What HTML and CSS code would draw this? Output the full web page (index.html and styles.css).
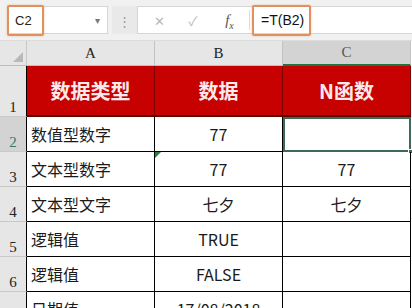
FILE: index.html
```html
<!DOCTYPE html>
<html lang="zh">
<head>
    <meta charset="utf-8">
    <title>N函数</title>
    <link rel="stylesheet" href="styles.css">
</head>
<body>
    <div class="toolbar">
        <div class="name-box">
            <span class="name-text">C2</span>
            <span class="arrow">&#9662;</span>
            <div class="mark mark-name"></div>
        </div>
        <div class="grip">&#8942;</div>
        <div class="formula-bar">
            <span class="btn cancel">&#10005;</span>
            <span class="btn enter">&#10003;</span>
            <span class="btn fx"><i>f</i><sub>x</sub></span>
            <div class="input">
                <span class="formula-text">=T(B2)</span>
                <div class="mark mark-formula"></div>
            </div>
        </div>
    </div>

    <div class="sheet">
        <div class="corner"><span class="tri"></span></div>
        <div class="col-head">A</div>
        <div class="col-head">B</div>
        <div class="col-head active">C</div>

        <div class="row-head tall">1</div>
        <div class="cell title">数据类型</div>
        <div class="cell title">数据</div>
        <div class="cell title">N函数</div>

        <div class="row-head active">2</div>
        <div class="cell left">数值型数字</div>
        <div class="cell">77</div>
        <div class="cell selected"><span class="handle"></span></div>

        <div class="row-head">3</div>
        <div class="cell left">文本型数字</div>
        <div class="cell"><span class="flag"></span>77</div>
        <div class="cell">77</div>

        <div class="row-head">4</div>
        <div class="cell left">文本型文字</div>
        <div class="cell">七夕</div>
        <div class="cell">七夕</div>

        <div class="row-head">5</div>
        <div class="cell left">逻辑值</div>
        <div class="cell">TRUE</div>
        <div class="cell"></div>

        <div class="row-head">6</div>
        <div class="cell left">逻辑值</div>
        <div class="cell">FALSE</div>
        <div class="cell"></div>

        <div class="row-head">7</div>
        <div class="cell left">日期值</div>
        <div class="cell">17/08/2018</div>
        <div class="cell"></div>
    </div>
</body>
</html>
```

FILE: styles.css
```css
* {
    margin: 0;
    padding: 0;
    box-sizing: border-box;
}

body {
    width: 412px;
    height: 308px;
    overflow: hidden;
    background-color: #ffffff;
    font-family: "Noto Sans CJK SC", "Noto Sans", sans-serif;
}

/* formula toolbar */
.toolbar {
    height: 41px;
    display: flex;
    align-items: center;
    padding-left: 8px;
    background-color: #f1f1f1;
    border-bottom: 1px solid #dcdcdc;
}

.name-box {
    position: relative;
    width: 100px;
    height: 28px;
    display: flex;
    align-items: center;
    justify-content: space-between;
    padding: 0 7px 0 6px;
    background-color: #ffffff;
    border: 1px solid #d6d6d6;
    font-family: "Liberation Sans", sans-serif;
    font-size: 13px;
    color: #222222;
}

.arrow {
    font-size: 10px;
    color: #777777;
}

.grip {
    width: 29px;
    height: 28px;
    display: flex;
    align-items: center;
    justify-content: center;
    color: #9a9a9a;
    font-size: 13px;
    background-color: #e9e9e9;
    margin: 0 0 0 4px;
    width: 25px;
}

.formula-bar {
    flex: 1;
    height: 28px;
    display: flex;
    align-items: center;
    background-color: #ffffff;
    border: 1px solid #d6d6d6;
    border-right: none;
}

.btn {
    width: 34px;
    text-align: center;
    color: #b9b9b9;
    font-size: 13px;
}

.cancel {
    margin-left: 4px;
}

.fx {
    width: 40px;
    color: #555555;
    font-family: "Liberation Serif", serif;
    font-size: 15px;
    border-right: 1px solid #dcdcdc;
    height: 20px;
    line-height: 20px;
}

.fx sub {
    font-size: 10px;
    font-style: italic;
}

.input {
    position: relative;
    flex: 1;
    height: 100%;
    display: flex;
    align-items: center;
    padding-left: 11px;
    font-family: "Liberation Sans", sans-serif;
    font-size: 14px;
    color: #111111;
}

/* orange annotation boxes */
.mark {
    position: absolute;
    border: 2px solid #e0915e;
    border-radius: 2px;
    box-shadow: 0 0 2px rgba(224, 145, 94, 0.6);
}

.mark-name {
    left: -2px;
    top: -2px;
    width: 37px;
    height: 31px;
}

.mark-formula {
    left: 2px;
    top: -2px;
    width: 59px;
    height: 31px;
}

/* worksheet grid */
.sheet {
    display: grid;
    grid-template-columns: 27px 128px 128px 128px;
    grid-template-rows: 25px 51px repeat(6, 35px);
}

.corner,
.col-head,
.row-head {
    background-color: #e6e6e6;
    color: #222222;
    font-family: "Liberation Serif", serif;
    font-size: 15px;
}

.corner {
    position: relative;
    border-right: 1px solid #c8c8c8;
    border-bottom: 1px solid #bdbdbd;
}

.tri {
    position: absolute;
    right: 3px;
    bottom: 3px;
    border-left: 10px solid transparent;
    border-bottom: 10px solid #b8b8b8;
}

.col-head {
    display: flex;
    justify-content: center;
    align-items: center;
    border-right: 1px solid #c3c3c3;
    border-bottom: 1px solid #bdbdbd;
}

.col-head.active {
    background-color: #d3d3d3;
    color: #555555;
    border-bottom: 2px solid #217346;
}

.row-head {
    display: flex;
    justify-content: center;
    align-items: flex-end;
    padding-bottom: 1px;
    border-bottom: 1px solid #c9c9c9;
    border-right: 1px solid #000000;
    line-height: 1;
}

.row-head.active {
    background-color: #d3d3d3;
    color: #3d7a60;
}

.cell {
    position: relative;
    display: flex;
    align-items: center;
    justify-content: center;
    border-right: 1px solid #000000;
    border-bottom: 1px solid #000000;
    font-size: 16px;
    color: #1a1a1a;
}

.cell.left {
    justify-content: flex-start;
    padding-left: 4px;
}

.cell.title {
    background-color: #c70000;
    color: #fbeaea;
    font-size: 20px;
    font-weight: bold;
    border-right: 1px solid #7a0000;
    border-bottom: 2px solid #5a0000;
}

.cell.selected {
    border: 2px solid #3e6a57;
}

.handle {
    position: absolute;
    right: -4px;
    bottom: -4px;
    width: 5px;
    height: 5px;
    background-color: #3e6a57;
    border: 1px solid #ffffff;
}

.flag {
    position: absolute;
    left: 0;
    top: 0;
    border-top: 6px solid #2f7d3a;
    border-right: 6px solid transparent;
}
```
